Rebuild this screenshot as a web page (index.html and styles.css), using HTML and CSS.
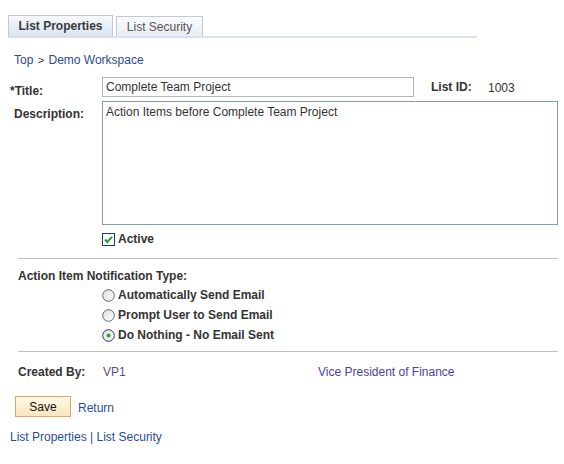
FILE: index.html
```html
<!DOCTYPE html>
<html>
<head>
<meta charset="utf-8">
<link rel="stylesheet" href="styles.css">
</head>
<body>
<div class="page">
  <div class="tabs">
    <div class="tab active-tab">List Properties</div>
    <div class="tab">List Security</div>
  </div>

  <div class="crumb"><a>Top</a> <span class="gt">&gt;</span> <a>Demo Workspace</a></div>

  <div class="row title-row">
    <div class="lbl title-lbl">*Title:</div>
    <div class="input">Complete Team Project</div>
    <div class="lbl id-lbl">List ID:</div>
    <div class="val id-val">1003</div>
  </div>

  <div class="row desc-row">
    <div class="lbl desc-lbl">Description:</div>
    <div class="textarea">Action Items before Complete Team Project</div>
  </div>

  <div class="opt check-row">
    <svg class="box" width="13" height="13" viewBox="0 0 13 13">
      <rect x="0.5" y="0.5" width="12" height="12" fill="#fff" stroke="#1e3f66"/>
      <path d="M3 6.5 L5.3 9 L10 3.8" fill="none" stroke="#2e9e2e" stroke-width="2"/>
    </svg>
    <span class="lbl">Active</span>
  </div>

  <div class="sep sep1"></div>

  <div class="lbl notif">Action Item Notification Type:</div>
  <div class="radios">
    <div class="opt">
      <svg class="box" width="13" height="13" viewBox="0 0 13 13">
        <defs><linearGradient id="rg" x1="0" y1="0" x2="1" y2="1"><stop offset="0" stop-color="#dcdcd6"/><stop offset="1" stop-color="#ffffff"/></linearGradient></defs>
        <circle cx="6.5" cy="6.5" r="5.8" fill="url(#rg)" stroke="#5c6a78"/>
      </svg>
      <span class="lbl">Automatically Send Email</span>
    </div>
    <div class="opt">
      <svg class="box" width="13" height="13" viewBox="0 0 13 13">
        <circle cx="6.5" cy="6.5" r="5.8" fill="url(#rg)" stroke="#5c6a78"/>
      </svg>
      <span class="lbl">Prompt User to Send Email</span>
    </div>
    <div class="opt">
      <svg class="box" width="13" height="13" viewBox="0 0 13 13">
        <circle cx="6.5" cy="6.5" r="5.8" fill="url(#rg)" stroke="#1e3f66"/>
        <circle cx="6.5" cy="6.5" r="2" fill="#2fa52f"/>
      </svg>
      <span class="lbl">Do Nothing - No Email Sent</span>
    </div>
  </div>

  <div class="sep sep2"></div>

  <div class="row created-row">
    <div class="lbl created-lbl">Created By:</div>
    <div class="val vp">VP1</div>
    <a class="vpname">Vice President of Finance</a>
  </div>

  <div class="row actions">
    <button class="save">Save</button>
    <a class="link">Return</a>
  </div>

  <div class="footer-links"><a class="link">List Properties</a> <span class="bar">|</span> <a class="link">List Security</a></div>
</div>
</body>
</html>
```

FILE: styles.css
```css
* { box-sizing: border-box; }
body {
  margin: 0;
  background: #fff;
  font-family: "Liberation Sans", Arial, sans-serif;
  font-size: 12px;
  color: #333;
}
.page { padding-top: 15px; }

.tabs {
  display: flex;
  gap: 3px;
  margin-left: 8px;
  width: 469px;
  border-bottom: 2px solid #d6e2f1;
}
.tab {
  width: 87px;
  height: 20px;
  margin-top: 1px;
  line-height: 20px;
  border: 1px solid #c3c9d1;
  border-bottom: none;
  text-align: center;
  color: #555;
  background: linear-gradient(#fafbfd, #e9eef5);
}
.tab.active-tab {
  width: 105px;
  height: 21px;
  margin-top: 0;
  line-height: 21px;
  font-weight: bold;
  color: #3a3a3a;
  background: linear-gradient(#f7f9fc, #d9e4f2);
}

.crumb {
  margin-top: 15px;
  margin-left: 14px;
  line-height: 14px;
  color: #2b4c8c;
}
.crumb a { color: #2b4c8c; }
.crumb .gt { color: #333; font-size: 11px; padding: 0 1px; }

.row { display: flex; align-items: flex-start; }
.lbl { font-weight: bold; color: #333; line-height: 14px; }
.val { line-height: 14px; color: #333; }

.title-row { margin-top: 10px; padding-left: 10px; height: 20px; }
.title-lbl { width: 92px; padding-top: 7px; }
.input {
  width: 312px;
  height: 20px;
  border: 1px solid #b5b5b5;
  padding: 2px 3px;
  line-height: 14px;
  color: #333;
}
.id-lbl { margin-left: 17px; width: 57px; padding-top: 3px; }
.id-val { padding-top: 4px; }

.desc-row { margin-top: 4px; padding-left: 14px; }
.desc-lbl { width: 88px; padding-top: 6px; }
.textarea {
  width: 456px;
  height: 124px;
  border: 1px solid #7f9db9;
  padding: 3px 3px;
  line-height: 14px;
  color: #333;
}

.opt { display: flex; align-items: center; gap: 3px; height: 14px; }
.opt .box { display: block; flex: none; }
.check-row { margin-top: 7px; margin-left: 102px; }

.sep { height: 1px; background: #bfbfbf; margin-left: 18px; width: 540px; }
.sep1 { margin-top: 12px; }

.notif { margin-top: 10px; margin-left: 18px; }
.radios { margin-left: 102px; margin-top: 5px; display: flex; flex-direction: column; gap: 6px; }

.sep2 { margin-top: 9px; }

.created-row { margin-top: 13px; padding-left: 18px; line-height: 14px; }
.created-lbl { width: 85px; }
.vp { color: #574f84; width: 215px; }
.vpname { color: #4a3fa3; }

.actions { margin-top: 17px; padding-left: 15px; align-items: center; gap: 7px; }
.save {
  width: 56px;
  height: 21px;
  border: 1px solid #e2a468;
  background: linear-gradient(#fff7e6, #fae6bd);
  font-family: "Liberation Sans", Arial, sans-serif;
  font-size: 12px;
  color: #111;
  padding: 0;
  margin: 0;
}
.link { color: #1f4f9e; }
.actions .link { padding-top: 3px; }

.footer-links { margin-top: 13px; margin-left: 10px; line-height: 14px; color: #1f4f9e; }
.footer-links .bar { color: #1f4f9e; }
```
